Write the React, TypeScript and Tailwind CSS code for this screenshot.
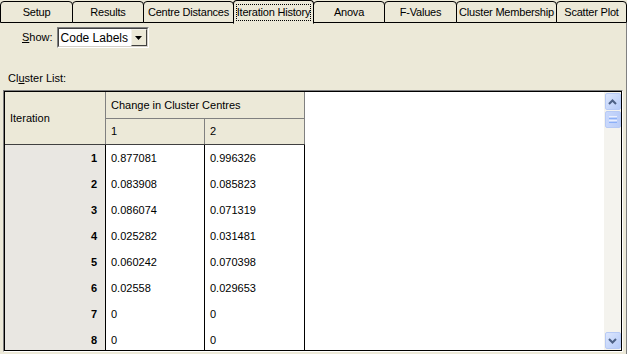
import clsx from "clsx";

const tabs = [
  { label: "Setup", width: "w-[73px]" },
  { label: "Results", width: "w-[72px]" },
  { label: "Centre Distances", width: "w-[91px]" },
  { label: "Iteration History", width: "w-[81px]", selected: true },
  { label: "Anova", width: "w-[72px]" },
  { label: "F-Values", width: "w-[73px]" },
  { label: "Cluster Membership", width: "w-[101px]" },
  { label: "Scatter Plot", width: "w-[71px]" },
];

const rows = [
  ["1", "0.877081", "0.996326"],
  ["2", "0.083908", "0.085823"],
  ["3", "0.086074", "0.071319"],
  ["4", "0.025282", "0.031481"],
  ["5", "0.060242", "0.070398"],
  ["6", "0.02558", "0.029653"],
  ["7", "0", "0"],
  ["8", "0", "0"],
];

function TabStrip() {
  return (
    <div className="flex h-[23px] items-end">
      {tabs.map((tab, i) => (
        <div
          key={tab.label}
          className={clsx(
            "flex shrink-0 items-center justify-center whitespace-nowrap rounded-t-[4px] border border-black bg-[#ECE9D8] tracking-[-0.2px]",
            tab.width,
            i > 0 && "-ml-px",
            tab.selected ? "relative z-10 h-[24px] border-b-[#ECE9D8] -mb-px" : "h-[22px]"
          )}
        >
          {tab.selected ? (
            <span className="border border-dotted border-black leading-[15px]">
              {tab.label}
            </span>
          ) : (
            <span className="leading-[15px]">{tab.label}</span>
          )}
        </div>
      ))}
    </div>
  );
}

function ComboBox() {
  return (
    <div className="w-[92px] h-[21px] border border-t-[#808080] border-l-[#808080] border-b-white border-r-white">
      <div className="flex h-full items-center border border-t-[#404040] border-l-[#404040] border-b-[#D4D0C8] border-r-[#D4D0C8] bg-white">
        <span className="flex-1 pl-[2px] text-[12px] leading-none">Code Labels</span>
        <div className="flex h-[17px] w-[16px] items-center justify-center border border-t-[#F4F3EE] border-l-[#F4F3EE] border-b-[#404040] border-r-[#404040] bg-[#ECE9D8]">
          <svg width="7" height="4" viewBox="0 0 7 4">
            <path d="M0 0h7L3.5 4z" fill="black" />
          </svg>
        </div>
      </div>
    </div>
  );
}

function ScrollButton({ down }: { down?: boolean }) {
  return (
    <div className="flex h-[17px] w-[16px] items-center justify-center rounded-[2px] border border-[#B7CAF5] bg-gradient-to-br from-[#DCE6FD] to-[#B6CBF8]">
      <svg width="9" height="6" viewBox="0 0 9 6">
        <path
          d={down ? "M1 1l3.5 3.5L8 1" : "M1 5l3.5-3.5L8 5"}
          stroke="#4D6185"
          strokeWidth="2"
          fill="none"
        />
      </svg>
    </div>
  );
}

function ScrollBar() {
  return (
    <div className="flex w-[17px] flex-col items-center bg-[#F4F3EE] py-px">
      <ScrollButton />
      <div className="mt-px flex h-[17px] w-[16px] flex-col items-center justify-center gap-px rounded-[2px] border border-[#B7CAF5] bg-gradient-to-r from-[#C9D8FC] to-[#BACDF8]">
        <div className="h-px w-[8px] bg-[#E9EFFE]" />
        <div className="h-px w-[8px] bg-[#8CB0F8]" />
        <div className="h-px w-[8px] bg-[#E9EFFE]" />
        <div className="h-px w-[8px] bg-[#8CB0F8]" />
      </div>
      <div className="flex-1" />
      <ScrollButton down />
    </div>
  );
}

function IterationGrid() {
  return (
    <div className="w-[300px] text-[11px]">
      <div className="flex h-[53px] border-b border-[#404040] bg-[#ECE9D8]">
        <div className="flex w-[101px] items-center border-r border-[#808080] pl-[5px]">
          Iteration
        </div>
        <div className="flex w-[199px] flex-col">
          <div className="flex h-[27px] items-center border-b border-r border-[#808080] pl-[5px]">
            Change in Cluster Centres
          </div>
          <div className="flex h-[25px]">
            <div className="flex w-[99px] items-center border-r border-[#808080] pl-[5px]">1</div>
            <div className="flex w-[100px] items-center border-r border-[#808080] pl-[5px]">2</div>
          </div>
        </div>
      </div>
      {rows.map(([it, a, b]) => (
        <div key={it} className="flex h-[26px]">
          <div className="flex w-[101px] items-center justify-end border-r border-black bg-[#E9E7E2] pr-[8px] font-bold">
            {it}
          </div>
          <div className="flex w-[99px] items-center border-r border-black pl-[5px]">{a}</div>
          <div className="flex w-[100px] items-center border-r border-black pl-[5px]">{b}</div>
        </div>
      ))}
    </div>
  );
}

export default function App() {
  return (
    <div className="flex h-[354px] w-[627px] flex-col overflow-hidden bg-[#ECE9D8] font-['Liberation_Sans',Arial,sans-serif] text-[11px] text-black">
      <TabStrip />
      <div className="flex min-h-0 flex-1 flex-col border-r border-[#808080]">
        <div className="flex items-center gap-[4px] pl-[22px] pt-[4px]">
          <span>
            <span className="underline">S</span>how:
          </span>
          <ComboBox />
        </div>
        <div className="mt-[24px] h-[13px] pl-[8px] leading-[13px]">
          Cl<span className="underline">u</span>ster List:
        </div>
        <div className="mx-[3px] mb-[2px] mt-[5px] flex min-h-0 flex-1 border border-t-[#808080] border-l-[#808080] border-b-white border-r-white">
          <div className="flex min-h-0 flex-1 overflow-hidden border border-black bg-white">
            <div className="min-w-0 flex-1 overflow-hidden">
              <IterationGrid />
            </div>
            <ScrollBar />
          </div>
        </div>
      </div>
    </div>
  );
}
